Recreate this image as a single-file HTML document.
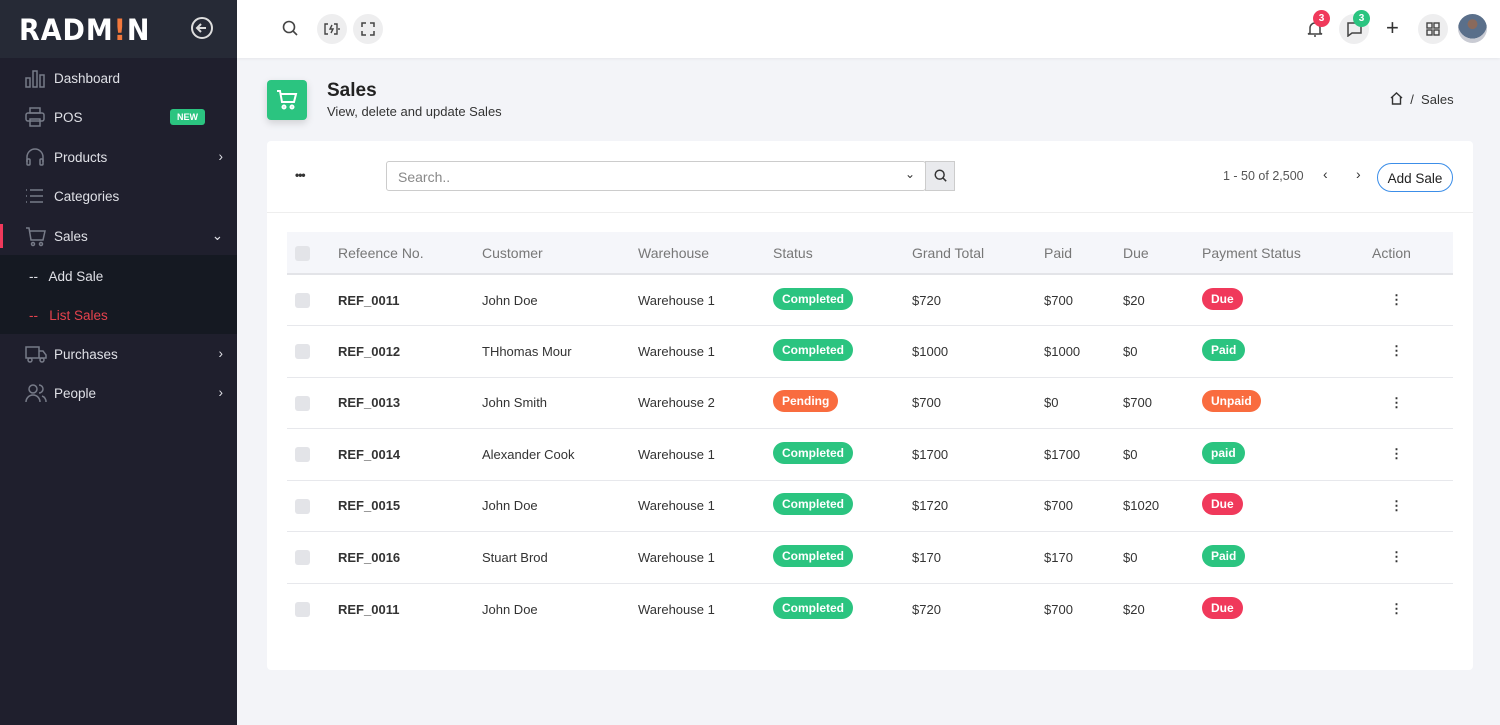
<!DOCTYPE html>
<html><head><style>
*{box-sizing:border-box;margin:0;padding:0}
body{width:1500px;height:725px;overflow:hidden;font-family:"Liberation Sans",sans-serif;background:#f3f4f8;position:relative;font-size:13px;color:#333}
.sb{position:absolute;left:0;top:0;width:237px;height:725px;background:#1f1f2d}
.logo{height:58px;background:#262a36;position:relative}
.logo .t{position:absolute;left:19px;top:13px;color:#fff;font-size:29px;font-weight:bold;letter-spacing:1px;font-family:"DejaVu Sans",sans-serif;transform:scaleX(0.93);transform-origin:left}
.mi{position:absolute;left:0;width:237px;height:39px;color:#dfe0e6;font-size:13.5px}
.mi .l{position:absolute;left:54px;top:13px}
.mi svg{position:absolute;left:25px;top:10px}
.mi .ch{position:absolute;right:14px;top:12px}
.top{position:absolute;left:237px;top:0;right:0;height:58px;background:#fff;box-shadow:0 1px 3px rgba(0,0,0,.06)}
.circ{position:absolute;width:30px;height:30px;border-radius:50%;background:#eeeeef}
.badge{position:absolute;width:17px;height:17px;border-radius:50%;color:#fff;font-size:10px;font-weight:bold;text-align:center;line-height:17px}
.card{position:absolute;left:267px;top:141px;width:1206px;height:529px;background:#fff;border-radius:4px}
table{position:absolute;left:20px;top:91px;width:1166px;border-collapse:collapse}
th{height:42px;background:#f5f6fa;color:#777;font-weight:normal;font-size:14px;text-align:left;border-bottom:2px solid #e3e4e8}
td{height:51.5px;border-bottom:1px solid #e7e8ec;font-size:13px;color:#333}
.cb{display:inline-block;width:15px;height:15px;background:#e3e4e8;border-radius:3px;margin-left:8px;vertical-align:middle}
.pill{display:inline-block;color:#fff;font-size:12px;font-weight:bold;padding:4px 9px;border-radius:11px;margin-top:-4px}
.g{background:#2bc480}.r{background:#f0395b}.o{background:#f96c3f}
</style></head><body>
<div class="sb">
 <div class="logo"><span class="t">RADM<span style="color:#f2783c">!</span>N</span>
  <svg style="position:absolute;left:190px;top:16px" width="24" height="24" viewBox="0 0 24 24" fill="none" stroke="#ddd" stroke-width="2"><circle cx="12" cy="12" r="10"/><path d="M16 12H8M11 8l-4 4 4 4"/></svg></div>
 <div class="mi" style="top:58px"><svg width="20" height="20" viewBox="0 0 20 20" fill="none" stroke="#777b88" stroke-width="1.5"><rect x="1" y="10" width="4" height="9"/><rect x="8" y="3" width="4" height="16"/><rect x="15" y="7" width="4" height="12"/></svg><span class="l">Dashboard</span></div>
 <div class="mi" style="top:97px"><svg width="20" height="20" viewBox="0 0 20 20" fill="none" stroke="#777b88" stroke-width="1.5"><rect x="5" y="1" width="10" height="5"/><rect x="1" y="6" width="18" height="8" rx="2"/><rect x="5" y="12" width="10" height="7"/></svg><span class="l">POS</span><span style="position:absolute;left:170px;top:12px;background:#2bc480;color:#fff;font-size:9px;font-weight:bold;padding:3px 7px;border-radius:3px">NEW</span></div>
 <div class="mi" style="top:137px"><svg width="20" height="20" viewBox="0 0 20 20" fill="none" stroke="#777b88" stroke-width="1.5"><path d="M2 15v-5a8 8 0 0116 0v5"/><rect x="2" y="12" width="3" height="6" rx="1"/><rect x="15" y="12" width="3" height="6" rx="1"/></svg><span class="l">Products</span><span class="ch">›</span></div>
 <div class="mi" style="top:176px"><svg width="20" height="20" viewBox="0 0 20 20" fill="none" stroke="#777b88" stroke-width="1.5"><path d="M1 4h1M1 10h1M1 16h1M5 4h13M5 10h13M5 16h13"/></svg><span class="l">Categories</span></div>
 <div class="mi" style="top:216px"><div style="position:absolute;left:0;top:8px;width:3px;height:24px;background:#f0395b"></div><svg width="22" height="22" viewBox="0 0 22 22" fill="none" stroke="#777b88" stroke-width="1.5"><path d="M1 2h3l2 12h12l2-9H5"/><circle cx="8" cy="18" r="1.5"/><circle cx="16" cy="18" r="1.5"/></svg><span class="l">Sales</span><span class="ch">⌄</span></div>
 <div style="position:absolute;top:255px;left:0;width:237px;height:79px;background:#151922"></div>
 <div class="mi" style="top:256px"><span class="l" style="left:29px">--&nbsp;&nbsp; Add Sale</span></div>
 <div class="mi" style="top:295px;color:#e5424d"><span class="l" style="left:29px">--&nbsp;&nbsp; List Sales</span></div>
 <div class="mi" style="top:334px"><svg width="22" height="20" viewBox="0 0 22 20" fill="none" stroke="#777b88" stroke-width="1.5"><rect x="1" y="3" width="13" height="11"/><path d="M14 7h4l3 4v3h-7"/><circle cx="5" cy="16" r="2"/><circle cx="17" cy="16" r="2"/></svg><span class="l">Purchases</span><span class="ch">›</span></div>
 <div class="mi" style="top:373px"><svg width="22" height="20" viewBox="0 0 22 20" fill="none" stroke="#777b88" stroke-width="1.5"><circle cx="8" cy="6" r="4"/><path d="M1 19a7 7 0 0114 0M14 2a4 4 0 010 8M17 13a6 6 0 014 6"/></svg><span class="l">People</span><span class="ch">›</span></div>
</div>
<div class="top">
 <svg style="position:absolute;left:45px;top:20px" width="16" height="16" viewBox="0 0 16 16" fill="none" stroke="#444" stroke-width="1.6"><circle cx="7" cy="7" r="5.5"/><path d="M11 11l4 4"/></svg>
 <div class="circ" style="left:80px;top:14px"><svg style="position:absolute;left:7px;top:8px" width="16" height="14" viewBox="0 0 16 14" fill="none" stroke="#444" stroke-width="1.4"><path d="M4 2H1v10h3M10 2h3v10h-3M15 6v2M8 3l-2 4h3l-2 4"/></svg></div>
 <div class="circ" style="left:116px;top:14px"><svg style="position:absolute;left:8px;top:8px" width="14" height="14" viewBox="0 0 14 14" fill="none" stroke="#444" stroke-width="1.5"><path d="M1 5V1h4M9 1h4v4M13 9v4H9M5 13H1V9"/></svg></div>
 <svg style="position:absolute;left:1070px;top:20px" width="16" height="18" viewBox="0 0 16 18" fill="none" stroke="#444" stroke-width="1.5"><path d="M3 13V8a5 5 0 0110 0v5l2 1H1zM7 16h2"/></svg>
 <div class="badge" style="left:1076px;top:10px;background:#f0395b">3</div>
 <div class="circ" style="left:1102px;top:14px"><svg style="position:absolute;left:8px;top:8px" width="15" height="15" viewBox="0 0 15 15" fill="none" stroke="#444" stroke-width="1.5"><path d="M1 1h13v10H5l-4 3z"/></svg></div>
 <div class="badge" style="left:1116px;top:10px;background:#2bc480">3</div>
 <div style="position:absolute;left:1149px;top:15px;font-size:22px;color:#333">+</div>
 <div class="circ" style="left:1181px;top:14px"><svg style="position:absolute;left:8px;top:8px" width="14" height="14" viewBox="0 0 14 14" fill="none" stroke="#444" stroke-width="1.4"><rect x="1" y="1" width="5" height="5"/><rect x="8" y="1" width="5" height="5"/><rect x="1" y="8" width="5" height="5"/><rect x="8" y="8" width="5" height="5"/></svg></div>
 <div style="position:absolute;left:1221px;top:14px;width:29px;height:29px;border-radius:50%;background:radial-gradient(circle at 50% 35%,#8a6a5c 0 20%,#5a6f8a 21% 60%,#c9cbd3 61%)"></div>
</div>
<div style="position:absolute;left:267px;top:80px;width:40px;height:40px;border-radius:4px;background:#2bc480;box-shadow:0 3px 8px rgba(0,0,0,.15)"><svg style="position:absolute;left:9px;top:9px" width="22" height="22" viewBox="0 0 22 22" fill="none" stroke="#fff" stroke-width="2"><path d="M1 2h3l2 11h12l2-8H5"/><circle cx="8" cy="18" r="1.5"/><circle cx="16" cy="18" r="1.5"/></svg></div>
<div style="position:absolute;left:327px;top:80px;font-size:19px;font-weight:bold;color:#222">Sales</div>
<div style="position:absolute;left:327px;top:104px;font-size:13px;color:#333">View, delete and update Sales</div>
<div style="position:absolute;left:1390px;top:92px;font-size:13px;color:#333"><svg width="13" height="13" viewBox="0 0 13 13" fill="none" stroke="#333" stroke-width="1.4" style="vertical-align:-1px"><path d="M1 6l5.5-5 5.5 5M2.5 5v7h8V5"/></svg> &nbsp;/ &nbsp;Sales</div>
<div class="card">
 <div style="position:absolute;left:28px;top:27px;font-size:12px;letter-spacing:-1px;color:#333;font-weight:bold">•••</div>
 <div style="position:absolute;left:119px;top:20px;width:540px;height:30px;border:1px solid #ccc;border-radius:3px"><span style="position:absolute;left:11px;top:7px;color:#888;font-size:14px">Search..</span><span style="position:absolute;right:10px;top:5px;font-size:12px">⌄</span></div>
 <div style="position:absolute;left:658px;top:20px;width:30px;height:30px;background:#e9eaed;border:1px solid #ccc"><svg style="position:absolute;left:8px;top:7px" width="13" height="13" viewBox="0 0 16 16" fill="none" stroke="#333" stroke-width="1.8"><circle cx="7" cy="7" r="5.5"/><path d="M11 11l4 4"/></svg></div>
 <div style="position:absolute;left:956px;top:28px;font-size:12.5px;color:#555">1 - 50 of 2,500</div>
 <div style="position:absolute;left:1056px;top:25px;font-size:14px">‹</div>
 <div style="position:absolute;left:1089px;top:25px;font-size:14px">›</div>
 <div style="position:absolute;left:1110px;top:22px;width:76px;height:29px;border:1px solid #3c8ee8;border-radius:15px;text-align:center;line-height:30px;font-size:13.5px;color:#222">Add Sale</div>
 <div style="position:absolute;left:0;top:71px;width:100%;border-top:1px solid #eee"></div>
 <table>
 <tr><th style="width:51px"><span class="cb"></span></th><th style="width:144px">Refeence No.</th><th style="width:156px">Customer</th><th style="width:135px">Warehouse</th><th style="width:139px">Status</th><th style="width:132px">Grand Total</th><th style="width:79px">Paid</th><th style="width:79px">Due</th><th style="width:170px">Payment Status</th><th>Action</th></tr>
 <tr><td><span class="cb"></span></td><td><b>REF_0011</b></td><td>John Doe</td><td>Warehouse 1</td><td><span class="pill g">Completed</span></td><td>$720</td><td>$700</td><td>$20</td><td><span class="pill r">Due</span></td><td style="padding-left:18px"><b>⋮</b></td></tr>
 <tr><td><span class="cb"></span></td><td><b>REF_0012</b></td><td>THhomas Mour</td><td>Warehouse 1</td><td><span class="pill g">Completed</span></td><td>$1000</td><td>$1000</td><td>$0</td><td><span class="pill g">Paid</span></td><td style="padding-left:18px"><b>⋮</b></td></tr>
 <tr><td><span class="cb"></span></td><td><b>REF_0013</b></td><td>John Smith</td><td>Warehouse 2</td><td><span class="pill o">Pending</span></td><td>$700</td><td>$0</td><td>$700</td><td><span class="pill o">Unpaid</span></td><td style="padding-left:18px"><b>⋮</b></td></tr>
 <tr><td><span class="cb"></span></td><td><b>REF_0014</b></td><td>Alexander Cook</td><td>Warehouse 1</td><td><span class="pill g">Completed</span></td><td>$1700</td><td>$1700</td><td>$0</td><td><span class="pill g">paid</span></td><td style="padding-left:18px"><b>⋮</b></td></tr>
 <tr><td><span class="cb"></span></td><td><b>REF_0015</b></td><td>John Doe</td><td>Warehouse 1</td><td><span class="pill g">Completed</span></td><td>$1720</td><td>$700</td><td>$1020</td><td><span class="pill r">Due</span></td><td style="padding-left:18px"><b>⋮</b></td></tr>
 <tr><td><span class="cb"></span></td><td><b>REF_0016</b></td><td>Stuart Brod</td><td>Warehouse 1</td><td><span class="pill g">Completed</span></td><td>$170</td><td>$170</td><td>$0</td><td><span class="pill g">Paid</span></td><td style="padding-left:18px"><b>⋮</b></td></tr>
 <tr><td style="border:0"><span class="cb"></span></td><td style="border:0"><b>REF_0011</b></td><td style="border:0">John Doe</td><td style="border:0">Warehouse 1</td><td style="border:0"><span class="pill g">Completed</span></td><td style="border:0">$720</td><td style="border:0">$700</td><td style="border:0">$20</td><td style="border:0"><span class="pill r">Due</span></td><td style="padding-left:18px;border:0"><b>⋮</b></td></tr>
 </table>
</div>
</body></html>
